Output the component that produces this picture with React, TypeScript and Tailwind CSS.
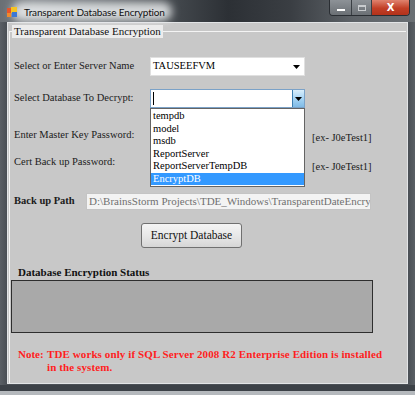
import React from 'react';

const serif = "font-['Liberation_Serif','Times_New_Roman',serif]";

const databases = ['tempdb', 'model', 'msdb', 'ReportServer', 'ReportServerTempDB', 'EncryptDB'];

function AppIcon() {
  return (
    <svg width="10" height="10" viewBox="0 0 10 10" className="shrink-0">
      <rect x="0" y="1" width="5" height="5" fill="#e8542a" />
      <rect x="4" y="0" width="6" height="6" fill="#f5c423" />
      <rect x="5" y="5" width="5" height="5" fill="#3b78d8" />
      <rect x="0" y="6" width="4" height="4" fill="#f08a2c" />
    </svg>
  );
}

function Caret() {
  return (
    <svg width="7" height="4" viewBox="0 0 7 4">
      <path d="M0 0 H7 L3.5 4 Z" fill="#000" />
    </svg>
  );
}

function TitleBar() {
  return (
    <div className="relative h-[22px] flex items-center bg-[linear-gradient(90deg,#6a6f74_0%,#7b8085_8%,#474c51_40%,#2c3035_55%,#3a3e43_70%,#5d6267_85%,#6a6f74_100%)]">
      {/* glow behind caption */}
      <div className="absolute left-[12px] top-[2px] w-[160px] h-[19px] rounded-full bg-[#eceef0]/85 blur-[4px]" />
      <div className="relative flex items-center gap-[7px] pl-[7px] pt-[1px]">
        <AppIcon />
        <span className="font-['Lato','Open_Sans',sans-serif] text-[10px] leading-none text-[#111] tracking-[-0.15px]">
          Transparent Database Encryption
        </span>
      </div>
      {/* caption buttons */}
      <div className="absolute right-[5px] top-0 flex h-[16px] rounded-b-[4px] border border-t-0 border-[#2a2e33] overflow-hidden">
        <div className="w-[22px] flex items-center justify-center border-r border-[#3a3f44] bg-[linear-gradient(#8d9297,#6b7075)]">
          <div className="w-[8px] h-[2px] bg-white mt-[4px]" />
        </div>
        <div className="w-[20px] flex items-center justify-center border-r border-[#3a3f44] bg-[linear-gradient(#8d9297,#6b7075)]">
          <div className="w-[8px] h-[6px] border border-[#c9cccf] border-t-2" />
        </div>
        <div className="w-[37px] flex items-center justify-center bg-[linear-gradient(#e0836f,#c23f26_55%,#b3321b)]">
          <span className="font-['DejaVu_Sans',sans-serif] text-[10px] font-bold leading-none text-white">X</span>
        </div>
      </div>
    </div>
  );
}

function Label({ children, bold = false, width }: { children: React.ReactNode; bold?: boolean; width: string }) {
  return (
    <div className={`${width} shrink-0 text-[10.5px] leading-none text-[#1b1b1b] ${bold ? 'font-bold' : ''}`}>
      {children}
    </div>
  );
}

export default function App() {
  return (
    <div className="w-[415px] h-[395px] overflow-hidden bg-[#4b5056] flex flex-col">
      <TitleBar />
      <div className="flex flex-1">
        <div className="w-[7px] bg-[linear-gradient(90deg,#5a5f65,#4a4f55)]" />
        {/* client area */}
        <div className={`${serif} w-[401px] h-[362px] bg-[#c8c8c8] border border-[#e2e4e6] flex flex-col`}>
          {/* group box */}
          <div className="relative ml-[1px] mt-[8px] w-[397px] flex-1 border-t border-l border-[#f4f4f4]">
            <div className="absolute left-[2px] -top-[7px] px-[2px] h-[13px] bg-[#ececec] text-[11px] leading-[13px] text-[#111]">
              Transparent Database Encryption
            </div>

            <div className="flex flex-col pl-[4px]">
              {/* server name */}
              <div className="mt-[25px] h-[19px] flex items-center">
                <Label width="w-[136px]">Select or Enter Server Name</Label>
                <div className="w-[155px] h-[19px] bg-white border border-[#e0e0e0] flex items-center pl-[2px] pr-[4px]">
                  <span className="flex-1 text-[10.5px] leading-none text-black">TAUSEEFVM</span>
                  <Caret />
                </div>
              </div>

              {/* database */}
              <div className="mt-[13px] h-[19px] flex items-center">
                <Label width="w-[136px]">Select Database To Decrypt:</Label>
                <div className="relative w-[155px] h-[19px] bg-white border border-[#7ba2c8] flex items-center">
                  <div className="flex-1 pl-[2px] flex items-center">
                    <div className="w-px h-[13px] bg-black" />
                  </div>
                  <div className="w-[12px] h-full flex items-center justify-center border-l border-[#3c7fb1] bg-[linear-gradient(#d9eefb,#a6d4f4_50%,#7fbbe6)]">
                    <Caret />
                  </div>
                  {/* open list */}
                  <div className="absolute z-10 left-[-1px] top-[18px] w-[155px] bg-white border border-[#646464] flex flex-col pt-[1px] pb-[1px]">
                    {databases.map((db) => (
                      <div
                        key={db}
                        className={`h-[12.5px] pl-[2px] flex items-center text-[10.5px] leading-none ${
                          db === 'EncryptDB' ? 'bg-[#3399ff] text-white' : 'text-black'
                        }`}
                      >
                        {db}
                      </div>
                    ))}
                  </div>
                </div>
              </div>

              {/* master key password */}
              <div className="mt-[18px] h-[19px] flex items-center">
                <Label width="w-[136px]">Enter Master Key Password:</Label>
                <div className="w-[155px] h-[19px] bg-white" />
                <span className="ml-[7px] mt-[6px] text-[10.5px] leading-none text-[#1b1b1b]">[ex- J0eTest1]</span>
              </div>

              {/* cert password */}
              <div className="mt-[8px] h-[19px] flex items-center">
                <Label width="w-[136px]">Cert Back up Password:</Label>
                <div className="w-[155px] h-[19px] bg-white" />
                <span className="ml-[7px] mt-[9px] text-[10.5px] leading-none text-[#1b1b1b]">[ex- J0eTest1]</span>
              </div>

              {/* backup path */}
              <div className="mt-[21px] h-[17px] flex items-center">
                <Label bold width="w-[72px]">Back up Path</Label>
                <div className="w-[285px] h-[17px] bg-[#f3f3f3] border border-[#c4c4c4] flex items-center pl-[2px] overflow-hidden">
                  <span className="whitespace-nowrap text-[11px] leading-none text-[#707070]">
                    D:\BrainsStorm Projects\TDE_Windows\TransparentDateEncry
                  </span>
                </div>
              </div>

              {/* action */}
              <div className="mt-[13px] ml-[127px] w-[101px] h-[25px] rounded-[3px] border border-[#707070] bg-[linear-gradient(#f4f4f4,#e8e8e8_50%,#d6d6d6)] flex items-center justify-center text-[11.5px] leading-none text-[#111]">
                Encrypt Database
              </div>

              {/* status */}
              <div className="mt-[19px] pl-[4px] text-[11px] font-bold leading-none text-[#111]">
                Database Encryption Status
              </div>
              <div className="mt-[2px] -ml-[3px] w-[362px] h-[53px] bg-[#a9a9a9] border border-[#2e2e2e]" />

              {/* note */}
              <div className="mt-[15px] pl-[4px] flex text-[11px] font-bold leading-[13px] text-[#ff1e1e] whitespace-nowrap">
                <span className="w-[29px] shrink-0">Note:</span>
                <span className="tracking-[0.1px]">
                  TDE works only if SQL Server 2008 R2 Enterprise Edition is installed
                  <br />
                  in the system.
                </span>
              </div>
            </div>
          </div>
        </div>
        <div className="w-[7px] bg-[linear-gradient(90deg,#4a4f55,#5a5f65)]" />
      </div>
      <div className="h-[6px] bg-[#3c4147]" />
      <div className="h-[4px] bg-[#b5b9bd]" />
    </div>
  );
}
